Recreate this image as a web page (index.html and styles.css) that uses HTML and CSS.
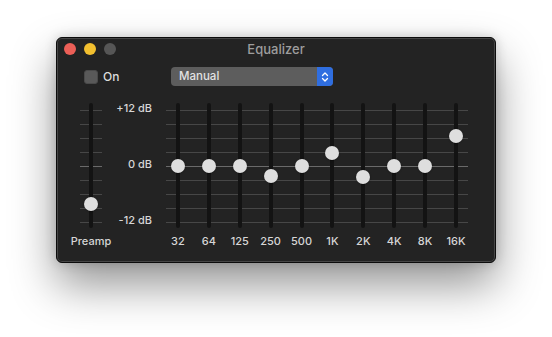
FILE: index.html
```html
<!DOCTYPE html>
<html lang="en">
<head>
<title>Equalizer</title>
<link rel="stylesheet" href="styles.css">
</head>
<body>
<div class="eq-window">
    <div class="titlebar">
        <div class="traffic">
            <span class="light close"></span>
            <span class="light min"></span>
            <span class="light zoom"></span>
        </div>
        <div class="title">Equalizer</div>
        <div></div>
    </div>

    <div class="controls">
        <label class="on-toggle">
            <span class="checkbox"></span>
            On
        </label>
        <div class="popup">
            <span class="popup-value">Manual</span>
            <span class="popup-arrows">
                <svg width="8" height="12" viewBox="0 0 8 12">
                    <path d="M1.5 4.5 L4 2 L6.5 4.5 M1.5 7.5 L4 10 L6.5 7.5" fill="none" stroke="#fff" stroke-width="1.3" stroke-linecap="round" stroke-linejoin="round"/>
                </svg>
            </span>
        </div>
    </div>

    <div class="sliders">
        <div class="preamp">
            <div class="track-wrap ticks-short">
                <div class="track"><span class="knob" style="--db:-8.1"></span></div>
            </div>
            <div class="band-label">Preamp</div>
        </div>

        <div class="db-scale">
            <span>+12 dB</span>
            <span>0 dB</span>
            <span>-12 dB</span>
        </div>

        <div class="bands">
            <div class="band">
                <div class="track"><span class="knob" style="--db:0"></span></div>
                <div class="band-label">32</div>
            </div>
            <div class="band">
                <div class="track"><span class="knob" style="--db:0"></span></div>
                <div class="band-label">64</div>
            </div>
            <div class="band">
                <div class="track"><span class="knob" style="--db:0"></span></div>
                <div class="band-label">125</div>
            </div>
            <div class="band">
                <div class="track"><span class="knob" style="--db:-2.1"></span></div>
                <div class="band-label">250</div>
            </div>
            <div class="band">
                <div class="track"><span class="knob" style="--db:0"></span></div>
                <div class="band-label">500</div>
            </div>
            <div class="band">
                <div class="track"><span class="knob" style="--db:2.8"></span></div>
                <div class="band-label">1K</div>
            </div>
            <div class="band">
                <div class="track"><span class="knob" style="--db:-2.4"></span></div>
                <div class="band-label">2K</div>
            </div>
            <div class="band">
                <div class="track"><span class="knob" style="--db:0"></span></div>
                <div class="band-label">4K</div>
            </div>
            <div class="band">
                <div class="track"><span class="knob" style="--db:0"></span></div>
                <div class="band-label">8K</div>
            </div>
            <div class="band">
                <div class="track"><span class="knob" style="--db:6.4"></span></div>
                <div class="band-label">16K</div>
            </div>
        </div>
    </div>
</div>
</body>
</html>
```

FILE: styles.css
```css
html, body {
    margin: 0;
    background-color: #ffffff;
    font-family: Inter, "Liberation Sans", sans-serif;
}

body {
    padding: 37px 0 0 56px;
    height: 337px;
    box-sizing: border-box;
    overflow: hidden;
}

.eq-window {
    width: 440px;
    height: 226px;
    box-sizing: border-box;
    background-color: #232323;
    border: 1px solid #0c0c0c;
    border-radius: 6px;
    box-shadow:
        inset 0 0 0 1px rgba(255, 255, 255, 0.16),
        0 22px 45px rgba(0, 0, 0, 0.42),
        0 0 12px rgba(0, 0, 0, 0.18);
}

/* title bar */

.titlebar {
    display: grid;
    grid-template-columns: 1fr auto 1fr;
    align-items: center;
    height: 22px;
}

.traffic {
    display: flex;
    gap: 8px;
    padding-left: 7px;
}

.light {
    width: 12px;
    height: 12px;
    border-radius: 50%;
}

.light.close { background-color: #ec5f57; }
.light.min { background-color: #f2bf2f; }
.light.zoom { background-color: #565656; }

.title {
    color: #9d9d9d;
    font-size: 13px;
    font-weight: 500;
}

/* on + preset row */

.controls {
    display: flex;
    align-items: center;
    height: 21px;
    margin-top: 6px;
    padding-left: 27px;
}

.on-toggle {
    display: flex;
    align-items: center;
    gap: 5px;
    width: 87px;
    color: #dcdcdc;
    font-size: 12px;
    font-weight: 500;
}

.checkbox {
    width: 14px;
    height: 14px;
    box-sizing: border-box;
    border-radius: 3px;
    background-color: #595959;
    border: 1px solid #4a4a4a;
}

.popup {
    display: flex;
    width: 162px;
    height: 19px;
    border-radius: 4px;
    overflow: hidden;
    background-color: #5d5d5d;
}

.popup-value {
    flex: 1;
    padding-left: 8px;
    line-height: 19px;
    color: #e2e2e2;
    font-size: 11.5px;
    font-weight: 500;
}

.popup-arrows {
    display: flex;
    align-items: center;
    justify-content: center;
    width: 16px;
    background-color: #2f6ee0;
}

/* sliders */

.sliders {
    display: flex;
    align-items: flex-start;
    margin-top: 16px;
    padding-left: 12px;
}

.preamp {
    display: flex;
    flex-direction: column;
    align-items: center;
    width: 44px;
}

.track-wrap {
    display: flex;
    justify-content: center;
    width: 22px;
}

.ticks-short,
.bands {
    background-image:
        linear-gradient(#6a6a6a, #6a6a6a),
        repeating-linear-gradient(to bottom, #474747 0 1px, transparent 1px 14px);
    background-repeat: no-repeat;
    background-size: 100% 1px, 100% 113px;
    background-position: 0 63px, 0 7px;
}

.bands {
    display: flex;
    background-size: calc(100% - 6px) 1px, calc(100% - 6px) 113px;
    background-position: 3px 63px, 3px 7px;
}

.band {
    display: flex;
    flex-direction: column;
    align-items: center;
    width: 30.9px;
}

.track {
    position: relative;
    width: 4px;
    height: 125px;
    border-radius: 2px;
    background-color: #131313;
}

.knob {
    position: absolute;
    left: -5px;
    top: calc(63px - var(--db) * 4.667px - 7px);
    width: 14px;
    height: 14px;
    border-radius: 50%;
    background-color: #dedede;
    box-shadow: 0 0.5px 1.5px rgba(0, 0, 0, 0.5);
}

.band-label {
    margin-top: 7px;
    line-height: 12px;
    color: #d6d6d6;
    font-size: 11px;
    font-weight: 500;
    white-space: nowrap;
}

.db-scale {
    display: flex;
    flex-direction: column;
    justify-content: space-between;
    align-items: flex-end;
    width: 39px;
    height: 126px;
    margin-top: -2px;
    padding-right: 10.5px;
    color: #d6d6d6;
    font-size: 11px;
    font-weight: 500;
    line-height: 14px;
}
```
